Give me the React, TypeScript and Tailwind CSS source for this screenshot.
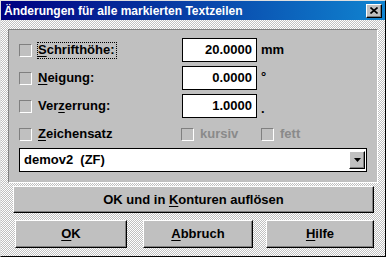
const dither =
  "bg-[repeating-conic-gradient(#c0c0c0_0_25%,#ffffff_0_50%)] bg-size-[2px_2px]";

const raised =
  "bg-[#c0c0c0] border border-t-white border-l-white border-r-black border-b-black shadow-[inset_-1px_-1px_#808080]";

function Check() {
  return (
    <span className="block w-[13px] h-[13px] shrink-0 bg-[#c0c0c0] border border-t-[#808080] border-l-[#808080] border-r-white border-b-white" />
  );
}

function Mn({ children }: { children: React.ReactNode }) {
  return <u className="underline decoration-1 underline-offset-[2px]">{children}</u>;
}

function Row({
  label,
  value,
  unit,
  focus = false,
  unitClass = "",
}: {
  label: React.ReactNode;
  value: string;
  unit: string;
  focus?: boolean;
  unitClass?: string;
}) {
  return (
    <div className="flex items-center h-[24px]">
      <div className="flex items-center w-[163px]">
        <Check />
        <span
          className={`ml-[5px] h-[17px] pr-[1px] flex items-center border ${
            focus ? "border-dotted border-black" : "border-transparent"
          }`}
        >
          {label}
        </span>
      </div>
      <div className="w-[75px] h-[24px] bg-white border border-black flex items-center justify-end pr-[4px]">
        {value}
      </div>
      <span className={`ml-[4px] self-stretch flex ${unitClass}`}>{unit}</span>
    </div>
  );
}

export default function App() {
  return (
    <div
      className={`w-[386px] h-[257px] flex flex-col border border-t-[#dfdfdf] border-l-[#dfdfdf] border-r-black border-b-black ${dither} text-[13px] font-bold text-black`}
      style={{ fontFamily: '"Liberation Sans", Arial, sans-serif' }}
    >
      <div className="h-[19px] flex items-center justify-between pl-[3px] pr-[3px] bg-[linear-gradient(to_right,#000080,#1084d0)]">
        <span className="text-white text-[12px] font-bold leading-none">
          Änderungen für alle markierten Textzeilen
        </span>
        <span className={`w-[16px] h-[14px] flex items-center justify-center ${raised}`}>
          <svg width="8" height="7" viewBox="0 0 8 7">
            <path d="M0.5 0.5 L7.5 6.5 M7.5 0.5 L0.5 6.5" stroke="black" strokeWidth="1.6" />
          </svg>
        </span>
      </div>

      <div className="mt-[9px] ml-[7px] w-[370px] bg-[#c0c0c0] border border-t-[#808080] border-l-[#808080] border-r-white border-b-white pt-[8px] pl-[10px] pr-[9px] pb-[10px] flex flex-col gap-[4px]">
        <Row
          focus
          label={
            <span>
              <Mn>S</Mn>chrifthöhe:
            </span>
          }
          value="20.0000"
          unit="mm"
          unitClass="items-center"
        />
        <Row
          label={
            <span>
              <Mn>N</Mn>eigung:
            </span>
          }
          value="0.0000"
          unit="°"
          unitClass="items-start pt-[1px]"
        />
        <Row
          label={
            <span>
              Ver<Mn>z</Mn>errung:
            </span>
          }
          value="1.0000"
          unit="."
          unitClass="items-end"
        />
        <div className="flex items-center h-[24px]">
          <div className="flex items-center w-[162px]">
            <Check />
            <span className="ml-[6px]">
              <Mn>Z</Mn>eichensatz
            </span>
          </div>
          <div className="flex items-center w-[80px]">
            <Check />
            <span className="ml-[6px] text-[#8a8a8a]">kursiv</span>
          </div>
          <div className="flex items-center">
            <Check />
            <span className="ml-[6px] text-[#8a8a8a]">fett</span>
          </div>
        </div>
        <div className="mt-[-2px] h-[24px] w-[348px] bg-white border border-black flex items-center justify-between pl-[4px] pr-[1px]">
          <span className="whitespace-pre">demov2  (ZF)</span>
          <span className={`w-[16px] h-[18px] flex items-center justify-center ${raised}`}>
            <svg width="7" height="4" viewBox="0 0 7 4">
              <path d="M0 0 H7 L3.5 4 Z" fill="black" />
            </svg>
          </span>
        </div>
      </div>

      <div className={`mt-[3px] ml-[12px] w-[361px] h-[27px] flex items-center justify-center ${raised}`}>
        <span>
          OK und in <Mn>K</Mn>onturen auflösen
        </span>
      </div>

      <div className="mt-[7px] ml-[14px] flex">
        <div className={`w-[112px] h-[28px] flex items-center justify-center ${raised}`}>
          <span>
            <Mn>O</Mn>K
          </span>
        </div>
        <div className={`ml-[16px] w-[110px] h-[28px] flex items-center justify-center ${raised}`}>
          <span>
            <Mn>A</Mn>bbruch
          </span>
        </div>
        <div className={`ml-[13px] w-[108px] h-[28px] flex items-center justify-center ${raised}`}>
          <span>
            <Mn>H</Mn>ilfe
          </span>
        </div>
      </div>
    </div>
  );
}
